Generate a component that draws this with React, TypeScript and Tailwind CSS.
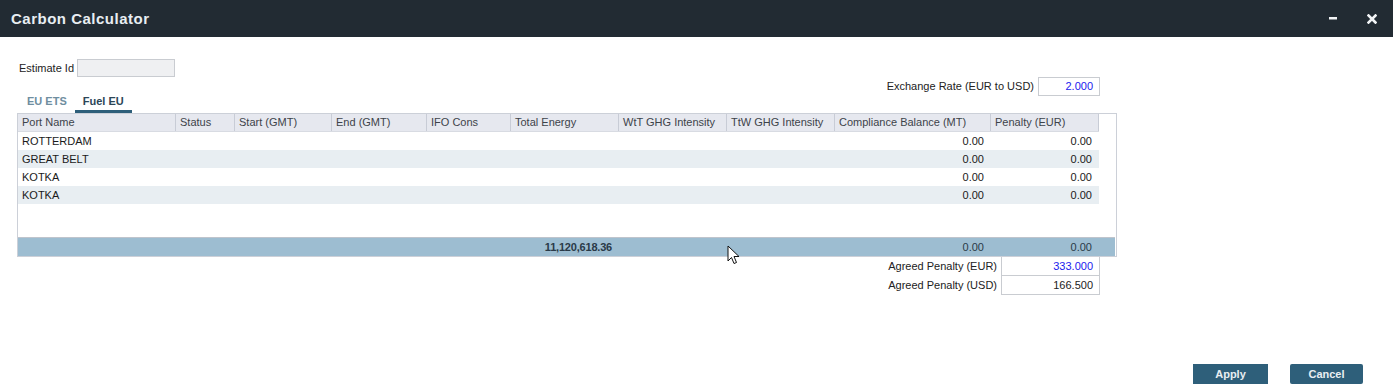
const COLUMNS = [
  { name: "Port Name", w: "w-[158px]" },
  { name: "Status", w: "w-[59px]" },
  { name: "Start (GMT)", w: "w-[97px]" },
  { name: "End (GMT)", w: "w-[95px]" },
  { name: "IFO Cons", w: "w-[84px]" },
  { name: "Total Energy", w: "w-[108px]" },
  { name: "WtT GHG Intensity", w: "w-[108px]" },
  { name: "TtW GHG Intensity", w: "w-[108px]" },
  { name: "Compliance Balance (MT)", w: "w-[156px]" },
  { name: "Penalty (EUR)", w: "w-[108px]" },
];

const ROWS = [
  { port: "ROTTERDAM", balance: "0.00", penalty: "0.00" },
  { port: "GREAT BELT", balance: "0.00", penalty: "0.00" },
  { port: "KOTKA", balance: "0.00", penalty: "0.00" },
  { port: "KOTKA", balance: "0.00", penalty: "0.00" },
];

function Cursor() {
  return (
    <svg className="absolute left-[727px] top-[245px]" width="14" height="21" viewBox="0 0 14 21">
      <path
        d="M1 1 L1 16 L4.5 12.5 L7 18.5 L9.5 17.5 L7 11.5 L12 11.5 Z"
        fill="#ffffff"
        stroke="#111111"
        strokeWidth="1"
        strokeLinejoin="round"
      />
    </svg>
  );
}

export default function App() {
  return (
    <div className="relative w-[1393px] h-[389px] bg-white text-[11px] text-[#222] font-['Liberation_Sans',Arial,sans-serif] flex flex-col">
      {/* title bar */}
      <div className="h-[37px] shrink-0 bg-[#222b33] flex items-center pl-[11px] pr-[16px]">
        <h1 className="text-[15px] font-bold tracking-[0.5px] text-[#e8eef2] leading-none">Carbon Calculator</h1>
        <div className="ml-auto flex items-center gap-[30px]">
          <svg width="8" height="3" viewBox="0 0 8 3">
            <rect width="8" height="2.5" fill="#f2f4f6" />
          </svg>
          <svg width="10" height="10" viewBox="0 0 10 10">
            <path d="M1.5 1.5 L8.5 8.5 M8.5 1.5 L1.5 8.5" stroke="#f2f4f6" strokeWidth="2.6" strokeLinecap="square" />
          </svg>
        </div>
      </div>

      <div className="pl-[17px] pt-[22px] w-[1117px]">
        {/* estimate id */}
        <div className="flex items-center h-[18px] pl-[2px]">
          <span className="mr-[3px]">Estimate Id</span>
          <div className="w-[98px] h-[18px] bg-[#eff0f2] border border-[#c9ccd1]" />
        </div>

        {/* tabs + exchange rate */}
        <div className="flex justify-between h-[36px]">
          <div className="self-end flex items-end h-[20px] text-[11px] font-bold">
            <div className="pl-[10px] pr-[8px] h-[20px] flex items-center text-[#6f8ea0] border-b-[3px] border-transparent">
              EU ETS
            </div>
            <div className="px-[8px] h-[20px] flex items-center text-[#2c4657] border-b-[3px] border-[#2e5f7a]">
              Fuel EU
            </div>
          </div>
          <div className="self-start flex items-center mr-[17px]">
            <span className="mr-[4px]">Exchange Rate (EUR to USD)</span>
            <div className="w-[62px] h-[19px] border border-[#c9ccd1] text-right pr-[6px] leading-[17px] text-[#1a1aee]">
              2.000
            </div>
          </div>
        </div>

        {/* grid */}
        <div className="w-[1100px] h-[144px] border border-[#ccd0d8] flex flex-col">
          <div className="flex h-[18px] bg-[#e6e8ef] text-[#3d434a] w-[1081px] border-b border-[#d8dbe2]">
            {COLUMNS.map((c) => (
              <div key={c.name} className={`${c.w} shrink-0 border-r border-[#c8ccd6] pl-[4px] leading-[17px] whitespace-nowrap overflow-hidden`}>
                {c.name}
              </div>
            ))}
          </div>
          {ROWS.map((r, i) => (
            <div key={i} className={`flex h-[18px] w-[1081px] pt-[1px] leading-[17px] text-[#1a1a1a] ${i % 2 === 1 ? "bg-[#e8eef2]" : "bg-white"}`}>
              <div className="w-[158px] shrink-0 pl-[4px]">{r.port}</div>
              <div className="w-[659px] shrink-0" />
              <div className="w-[156px] shrink-0 text-right pr-[7px]">{r.balance}</div>
              <div className="w-[108px] shrink-0 text-right pr-[7px]">{r.penalty}</div>
            </div>
          ))}
          <div className="flex-1" />
          <div className="h-[19px] border-t border-[#bfc4cc] bg-[#9dbdd1] mr-[1px] flex leading-[18px] text-[#2a3a48]">
            <div className="w-[601px] shrink-0 text-right pr-[7px] font-bold tracking-[-0.2px]">11,120,618.36</div>
            <div className="w-[372px] shrink-0 text-right pr-[7px]">0.00</div>
            <div className="w-[108px] shrink-0 text-right pr-[7px]">0.00</div>
          </div>
        </div>

        {/* agreed penalty */}
        <div className="flex flex-col items-end mr-[17px]">
          <div className="flex items-center">
            <span className="mr-[4px]">Agreed Penalty (EUR)</span>
            <div className="w-[99px] h-[19px] border border-t-0 border-[#c9ccd1] text-right pr-[6px] leading-[18px] text-[#1a1aee]">
              333.000
            </div>
          </div>
          <div className="flex items-center">
            <span className="mr-[4px]">Agreed Penalty (USD)</span>
            <div className="w-[99px] h-[19px] border border-t-0 border-[#c9ccd1] text-right pr-[6px] leading-[18px]">
              166.500
            </div>
          </div>
        </div>
      </div>

      {/* actions */}
      <div className="mt-auto mb-[5px] flex justify-end gap-[22px] pr-[30px]">
        <button className="w-[75px] h-[20px] bg-[#2e5f7a] text-[#e9eef2] font-bold">Apply</button>
        <button className="w-[73px] h-[20px] bg-[#2e5f7a] text-[#e9eef2] font-bold rounded-[2px]">Cancel</button>
      </div>

      <Cursor />
    </div>
  );
}
